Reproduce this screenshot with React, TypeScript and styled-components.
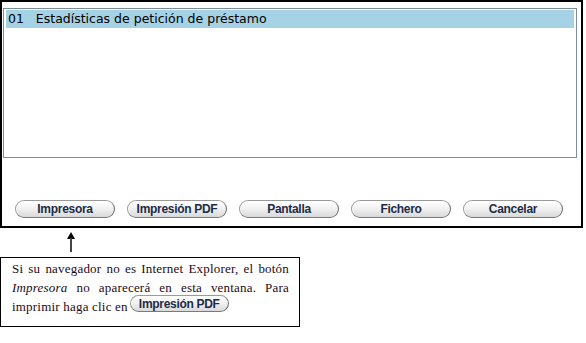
import styled, { createGlobalStyle } from "styled-components";

const Global = createGlobalStyle`
  body {
    margin: 0;
    background: #ffffff;
  }
`;

const Page = styled.div({
  width: 586,
  height: 343,
  overflow: "hidden"
});

const Dialog = styled.div({
  boxSizing: "border-box",
  width: 583,
  height: 228,
  border: "2px solid #000",
  padding: "6px 4px 0 1px",
  display: "flex",
  flexDirection: "column"
});

const ListBox = styled.div({
  boxSizing: "border-box",
  height: 150,
  border: "1px solid #7b8d9c",
  padding: "1px 2px"
});

const Row = styled.div<{ selected?: boolean }>(({ selected }) => ({
  height: 18,
  lineHeight: "18px",
  paddingLeft: 2,
  background: selected ? "#a6d2e5" : "transparent",
  fontFamily: "\"DejaVu Sans\", Tahoma, sans-serif",
  fontSize: 12.5,
  color: "#000",
  whiteSpace: "pre"
}));

const ButtonBar = styled.div({
  display: "flex",
  gap: 12,
  paddingLeft: 12,
  marginTop: 42
});

const PillButton = styled.button<{ w?: number }>(({ w }) => ({
  boxSizing: "border-box",
  width: w ?? 100,
  height: 18,
  padding: 0,
  borderRadius: 9,
  border: "1px solid #9a9a9a",
  borderRightColor: "#6f6f6f",
  borderBottomColor: "#7a7a7a",
  background: "linear-gradient(#ffffff 0%, #f2f2f2 45%, #d9d9d9 100%)",
  boxShadow: "inset 1px 1px 0 #ffffff",
  fontFamily: "\"Liberation Sans\", Arial, sans-serif",
  fontWeight: 700,
  fontSize: 12,
  letterSpacing: -0.3,
  color: "#1c2b48",
  lineHeight: "16px",
  cursor: "pointer"
}));

const Arrow = styled.svg({
  display: "block",
  marginLeft: 66,
  marginTop: 4
});

const Note = styled.div({
  boxSizing: "border-box",
  width: 300,
  height: 70,
  marginTop: 5,
  border: "1px solid #000",
  padding: "1px 10px 0 11px",
  fontFamily: "\"Liberation Serif\", \"Times New Roman\", serif",
  fontSize: 13,
  lineHeight: "19px",
  color: "#1e0a16",
  textAlign: "justify",
  letterSpacing: 0.2
});

const InlineButton = styled(PillButton)({
  verticalAlign: "top",
  marginLeft: 2,
  marginTop: -2,
  height: 17
});

const buttons = ["Impresora", "Impresión PDF", "Pantalla", "Fichero", "Cancelar"];

export default function App() {
  return (
    <Page>
      <Global />
      <Dialog>
        <ListBox>
          <Row selected>{"01   Estadísticas de petición de préstamo"}</Row>
        </ListBox>
        <ButtonBar>
          {buttons.map((b) => (
            <PillButton key={b}>{b}</PillButton>
          ))}
        </ButtonBar>
      </Dialog>
      <Arrow width="10" height="20" viewBox="0 0 10 20">
        <polygon points="5,0 9,7 1,7" fill="#000" />
        <rect x="4" y="6" width="2" height="14" fill="#444" />
      </Arrow>
      <Note>
        Si su navegador no es Internet Explorer, el botón <i>Impresora</i> no
        aparecerá en esta ventana. Para imprimir haga clic en
        <InlineButton w={99}>Impresión PDF</InlineButton>
      </Note>
    </Page>
  );
}
